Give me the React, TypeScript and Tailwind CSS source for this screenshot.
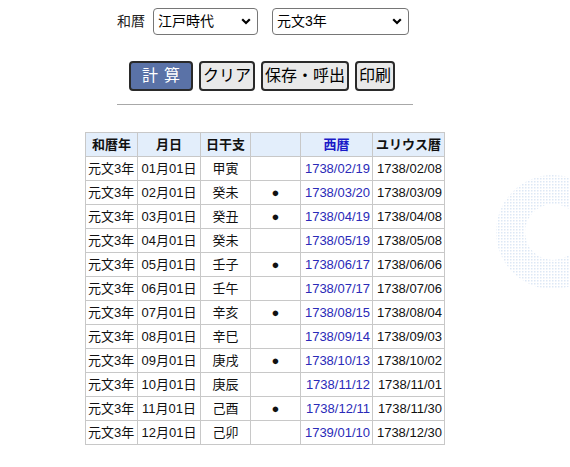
import React from "react";

const rows = [
  ["01月01日", "甲寅", false, "1738/02/19", "1738/02/08"],
  ["02月01日", "癸未", true, "1738/03/20", "1738/03/09"],
  ["03月01日", "癸丑", true, "1738/04/19", "1738/04/08"],
  ["04月01日", "癸未", false, "1738/05/19", "1738/05/08"],
  ["05月01日", "壬子", true, "1738/06/17", "1738/06/06"],
  ["06月01日", "壬午", false, "1738/07/17", "1738/07/06"],
  ["07月01日", "辛亥", true, "1738/08/15", "1738/08/04"],
  ["08月01日", "辛巳", false, "1738/09/14", "1738/09/03"],
  ["09月01日", "庚戌", true, "1738/10/13", "1738/10/02"],
  ["10月01日", "庚辰", false, "1738/11/12", "1738/11/01"],
  ["11月01日", "己酉", true, "1738/12/11", "1738/11/30"],
  ["12月01日", "己卯", false, "1739/01/10", "1738/12/30"],
] as const;

function Select({ value, width }: { value: string; width: string }) {
  return (
    <div className={`relative ${width} h-[27px]`}>
      <select
        defaultValue={value}
        className="appearance-none w-full h-full border border-[#767676] rounded-[4px] bg-white pl-[4px] text-[14px] text-black"
      >
        <option>{value}</option>
      </select>
      <svg
        className="pointer-events-none absolute right-[7px] top-[10px]"
        width="10"
        height="7"
        viewBox="0 0 10 7"
      >
        <path d="M1.2 1.2 L5 5 L8.8 1.2" fill="none" stroke="#000" strokeWidth="2.2" />
      </svg>
    </div>
  );
}

function Deco() {
  return (
    <svg className="absolute left-[480px] top-[160px]" width="90" height="150" viewBox="0 0 90 150">
      <defs>
        <pattern id="dots" width="3" height="3" patternUnits="userSpaceOnUse">
          <rect width="1.5" height="1.5" fill="#dde8f5" />
        </pattern>
        <mask id="ring">
          <circle cx="73" cy="72" r="57" fill="#fff" />
          <circle cx="73" cy="72" r="28" fill="#000" />
        </mask>
      </defs>
      <rect width="90" height="150" fill="url(#dots)" mask="url(#ring)" />
    </svg>
  );
}

export default function App() {
  const td = "border border-[#c8c8c8] h-[24px] px-[2px] whitespace-nowrap";
  const btn = "h-[30px] px-[2px] rounded-[4px] border-2 border-[#2a2a2a] bg-[#e9e9e9]";
  return (
    <div
      className="relative w-[570px] h-[467px] bg-white overflow-hidden text-black"
      style={{ fontFamily: '"Liberation Sans", "Noto Sans CJK JP", sans-serif' }}
    >
      <Deco />
      <div className="relative w-[530px] flex flex-col items-center">
        <div className="flex items-center mt-[8px] ml-[-4px] text-[14px]">
          <span className="mr-[8px] text-[#222]">和暦</span>
          <Select value="江戸時代" width="w-[105px]" />
          <div className="w-[14px]" />
          <Select value="元文3年" width="w-[137px]" />
        </div>

        <div className="flex items-center gap-[6px] mt-[26px] ml-[-6px] text-[16px]">
          <button className="h-[30px] w-[64px] rounded-[4px] border-2 border-[#2a2a2a] bg-[#5a72a7] text-white tracking-[6px] pl-[6px]">
            計算
          </button>
          <button className={btn}>クリア</button>
          <button className={btn}>保存・呼出</button>
          <button className={btn}>印刷</button>
        </div>

        <div className="w-[296px] h-px bg-[#a8a8a8] mt-[13px]" />

        <table className="mt-[27px] border-collapse text-[13px] text-[#111]">
          <thead>
            <tr className="bg-[#e3eefb] font-bold">
              <th className={`${td} w-[52px]`}>和暦年</th>
              <th className={`${td} w-[63px]`}>月日</th>
              <th className={`${td} w-[50px]`}>日干支</th>
              <th className={`${td} w-[50px]`}></th>
              <th className={`${td} w-[72px] text-[#1a1ac8]`}>西暦</th>
              <th className={`${td} w-[72px]`}>ユリウス暦</th>
            </tr>
          </thead>
          <tbody>
            {rows.map((r) => (
              <tr key={r[0]}>
                <td className={td}>元文3年</td>
                <td className={`${td} text-center`}>{r[0]}</td>
                <td className={`${td} text-center`}>{r[1]}</td>
                <td className={`${td} text-center`}>{r[2] ? "●" : ""}</td>
                <td className={`${td} text-right text-[#2a2ab8]`}>{r[3]}</td>
                <td className={`${td} text-right`}>{r[4]}</td>
              </tr>
            ))}
          </tbody>
        </table>
      </div>
    </div>
  );
}
